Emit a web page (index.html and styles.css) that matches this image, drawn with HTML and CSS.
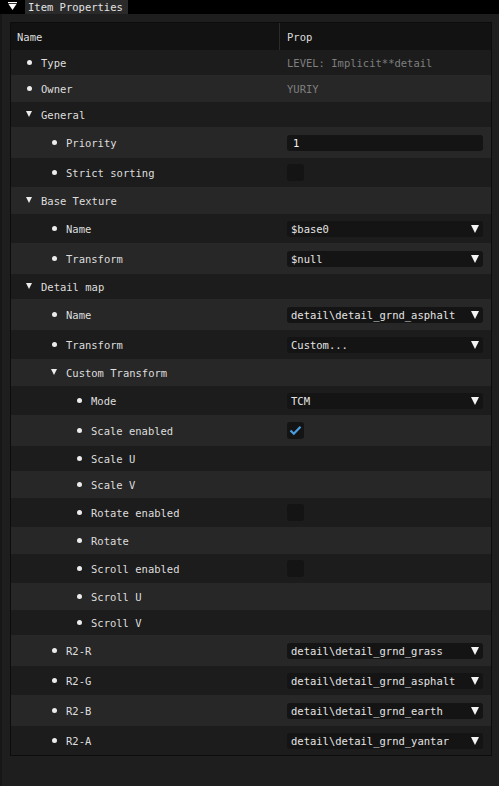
FILE: index.html
```html
<!DOCTYPE html>
<html>
<head>
<meta charset="utf-8">
<link rel="stylesheet" href="styles.css">
</head>
<body>
<div class="titlebar">
  <div class="menu-btn">
    <svg width="25" height="14" viewBox="0 0 25 14"><rect x="8" y="2" width="9" height="1.2" fill="#fff"/><polygon points="8.5,4 16.5,4 12.5,10" fill="#fff"/></svg>
  </div>
  <div class="tab">Item Properties</div>
</div>
<div class="window">
  <div class="table">
    <div class="header">
      <div class="hname">Name</div>
      <div class="hprop">Prop</div>
    </div>
    <div class="body">
      <div class="row"><div class="name l0"><span class="mk"><i class="bullet"></i></span>Type</div><div class="val"><span class="dis">LEVEL: Implicit**detail</span></div></div>
      <div class="row"><div class="name l0"><span class="mk"><i class="bullet"></i></span>Owner</div><div class="val"><span class="dis">YURIY</span></div></div>
      <div class="row"><div class="name l0"><span class="mk"><i class="tri"></i></span>General</div><div class="val"></div></div>
      <div class="row f"><div class="name l1"><span class="mk"><i class="bullet"></i></span>Priority</div><div class="val"><div class="frame input">1</div></div></div>
      <div class="row f"><div class="name l1"><span class="mk"><i class="bullet"></i></span>Strict sorting</div><div class="val"><div class="check"></div></div></div>
      <div class="row"><div class="name l0"><span class="mk"><i class="tri"></i></span>Base Texture</div><div class="val"></div></div>
      <div class="row f"><div class="name l1"><span class="mk"><i class="bullet"></i></span>Name</div><div class="val"><div class="frame combo"><span>$base0</span><i class="arrow"></i></div></div></div>
      <div class="row f"><div class="name l1"><span class="mk"><i class="bullet"></i></span>Transform</div><div class="val"><div class="frame combo"><span>$null</span><i class="arrow"></i></div></div></div>
      <div class="row"><div class="name l0"><span class="mk"><i class="tri"></i></span>Detail map</div><div class="val"></div></div>
      <div class="row f"><div class="name l1"><span class="mk"><i class="bullet"></i></span>Name</div><div class="val"><div class="frame combo"><span>detail\detail_grnd_asphalt</span><i class="arrow"></i></div></div></div>
      <div class="row f"><div class="name l1"><span class="mk"><i class="bullet"></i></span>Transform</div><div class="val"><div class="frame combo"><span>Custom...</span><i class="arrow"></i></div></div></div>
      <div class="row"><div class="name l1"><span class="mk"><i class="tri"></i></span>Custom Transform</div><div class="val"></div></div>
      <div class="row f"><div class="name l2"><span class="mk"><i class="bullet"></i></span>Mode</div><div class="val"><div class="frame combo"><span>TCM</span><i class="arrow"></i></div></div></div>
      <div class="row f"><div class="name l2"><span class="mk"><i class="bullet"></i></span>Scale enabled</div><div class="val"><div class="check"><svg width="17" height="17" viewBox="0 0 17 17"><polyline points="3.5,8.5 6.8,11.8 13.5,4.8" fill="none" stroke="#4a9fe0" stroke-width="2.2"/></svg></div></div></div>
      <div class="row"><div class="name l2"><span class="mk"><i class="bullet"></i></span>Scale U</div><div class="val"></div></div>
      <div class="row"><div class="name l2"><span class="mk"><i class="bullet"></i></span>Scale V</div><div class="val"></div></div>
      <div class="row f"><div class="name l2"><span class="mk"><i class="bullet"></i></span>Rotate enabled</div><div class="val"><div class="check"></div></div></div>
      <div class="row"><div class="name l2"><span class="mk"><i class="bullet"></i></span>Rotate</div><div class="val"></div></div>
      <div class="row f"><div class="name l2"><span class="mk"><i class="bullet"></i></span>Scroll enabled</div><div class="val"><div class="check"></div></div></div>
      <div class="row"><div class="name l2"><span class="mk"><i class="bullet"></i></span>Scroll U</div><div class="val"></div></div>
      <div class="row"><div class="name l2"><span class="mk"><i class="bullet"></i></span>Scroll V</div><div class="val"></div></div>
      <div class="row f"><div class="name l1"><span class="mk"><i class="bullet"></i></span>R2-R</div><div class="val"><div class="frame combo"><span>detail\detail_grnd_grass</span><i class="arrow"></i></div></div></div>
      <div class="row f"><div class="name l1"><span class="mk"><i class="bullet"></i></span>R2-G</div><div class="val"><div class="frame combo"><span>detail\detail_grnd_asphalt</span><i class="arrow"></i></div></div></div>
      <div class="row f"><div class="name l1"><span class="mk"><i class="bullet"></i></span>R2-B</div><div class="val"><div class="frame combo"><span>detail\detail_grnd_earth</span><i class="arrow"></i></div></div></div>
      <div class="row f"><div class="name l1"><span class="mk"><i class="bullet"></i></span>R2-A</div><div class="val"><div class="frame combo"><span>detail\detail_grnd_yantar</span><i class="arrow"></i></div></div></div>
    </div>
  </div>
</div>
</body>
</html>
```

FILE: styles.css
```css
* { box-sizing: border-box; }
html, body {
  margin: 0;
  padding: 0;
  background: #1e1e1e;
  height: 100%;
}
body {
  font-family: "DejaVu Sans Mono", "Liberation Mono", monospace;
  font-size: 10.5px;
  color: #dedede;
  overflow: hidden;
}
.titlebar {
  height: 14px;
  background: #000;
  display: flex;
  align-items: stretch;
}
.menu-btn {
  width: 25px;
  height: 14px;
}
.menu-btn svg { display: block; }
.tab {
  background: #2a2a2a;
  padding: 0 5px 0 3px;
  line-height: 14px;
  color: #e2e2e2;
  white-space: nowrap;
}
.window {
  padding: 8px 7px 0 8px;
  border-left: 2px solid #171717;
  min-height: calc(100% - 14px);
}
.table {
  width: 482px;
  border: 1px solid #0c0c0c;
}
.header {
  height: 27px;
  background: #121212;
  display: flex;
  align-items: center;
}
.hname {
  width: 268px;
  padding-left: 6px;
  height: 100%;
  display: flex;
  align-items: center;
}
.hprop {
  flex: 1;
  height: 100%;
  border-left: 1px solid #2b2b2b;
  padding-left: 7px;
  display: flex;
  align-items: center;
}
.row {
  display: flex;
  align-items: center;
  height: 25px;
  background: #1c1c1c;
}
.row.f { height: 29px; }
.row:nth-child(even) { height: 27px; background: #272727; }
.row.f:nth-child(even) { height: 31px; }
.name {
  width: 268px;
  display: flex;
  align-items: center;
  white-space: nowrap;
  padding-left: 11px;
}
.name.l1 { padding-left: 36px; }
.name.l2 { padding-left: 61px; }
.mk {
  width: 14px;
  height: 12px;
  margin-right: 5px;
  display: flex;
  align-items: center;
  justify-content: center;
}
.bullet {
  width: 5px;
  height: 5px;
  border-radius: 50%;
  background: #ececec;
  margin-top: -1px;
}
.tri {
  width: 0;
  height: 0;
  border-left: 3.5px solid transparent;
  border-right: 3.5px solid transparent;
  border-top: 6px solid #ececec;
  margin-top: -1px;
}
.val {
  flex: 1;
  padding-left: 8px;
  padding-right: 8px;
  display: flex;
  align-items: center;
}
.dis { color: #7f7f7f; }
.frame {
  width: 196px;
  height: 16px;
  background: #141414;
  border-radius: 3px;
  display: flex;
  align-items: center;
  padding-left: 4px;
  color: #e4e4e4;
  white-space: nowrap;
}
.input { padding-left: 6px; color: #f2f2f2; }
.combo { justify-content: space-between; padding-right: 4px; }
.arrow {
  width: 0;
  height: 0;
  border-left: 4.5px solid transparent;
  border-right: 4.5px solid transparent;
  border-top: 8px solid #f4f4f4;
}
.check {
  width: 17px;
  height: 17px;
  background: #141414;
  border-radius: 3px;
}
.check svg { display: block; }
```
